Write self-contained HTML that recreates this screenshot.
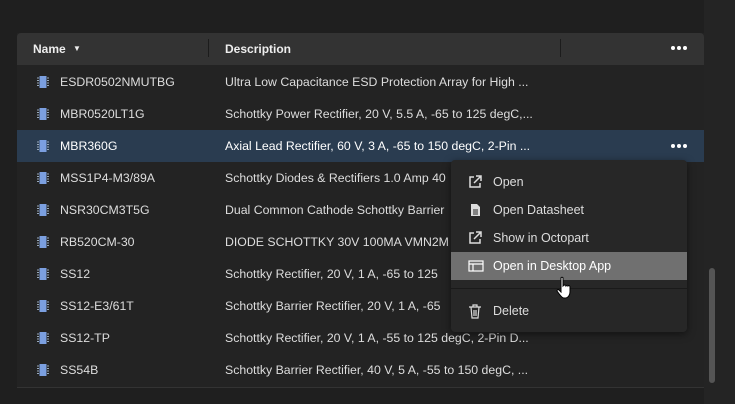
<!DOCTYPE html>
<html><head><style>
*{margin:0;padding:0;box-sizing:border-box}
body{width:735px;height:404px;background:#1f1f1f;font-family:"Liberation Sans",sans-serif;position:relative;overflow:hidden;color:#e6e6e6}
.strip{position:absolute;left:704px;top:0;width:31px;height:404px;background:#242424}
.tbl{position:absolute;left:17px;top:33px;width:687px;height:355px;background:#232323;border-bottom:1px solid #333}
.hdr{position:absolute;left:0;top:0;width:687px;height:32px;background:#333;border-radius:4px 4px 0 0;font-size:12px;font-weight:bold;color:#eee}
.hdr span{position:absolute;top:9px}
.sep{position:absolute;top:6px;width:1px;height:18px;background:#1c1c1c}
.row{position:absolute;left:0;width:687px;height:32px;font-size:12.3px;color:#ddd}
.row.sel{background:#2a3c50;color:#fff}
.row .n{position:absolute;left:43px;top:9px}
.row .d{position:absolute;left:208px;top:9px}
.chip{position:absolute;left:19px;top:9px;width:14px;height:14px}
.dots{position:absolute;display:flex;gap:2px}
.dots i{width:4px;height:4px;border-radius:50%;background:#fff;display:block}
.menu{position:absolute;left:451px;top:160px;width:236px;height:172px;background:#272727;border-radius:4px;box-shadow:0 2px 8px rgba(0,0,0,.5);font-size:12.5px;color:#ddd}
.mi{position:absolute;left:0;width:236px;height:28px}
.mi span{position:absolute;left:42px;top:7px}
.mi svg{position:absolute;left:17px;top:7px}
.mi.hl{background:#707070;color:#fff}
.scroll{position:absolute;left:709px;top:268px;width:6px;height:115px;border-radius:3px;background:#555}
</style></head><body>
<div class="strip"></div>
<div class="tbl">
<div class="hdr"><span style="left:16px">Name</span><span style="left:56px;top:11px;font-size:8px">&#9660;</span><div class="sep" style="left:191px"></div><span style="left:208px">Description</span><div class="sep" style="left:543px"></div>
<div class="dots" style="left:654px;top:13px"><i></i><i></i><i></i></div></div>
</div>
<div id="rows"></div>
<div class="menu">
<div class="mi" style="top:8px"><svg width="14" height="14" viewBox="0 0 14 14" fill="none" stroke="#ddd" stroke-width="1.5"><path d="M6 2H2v10h10V8M8 1h5v5M13 1L6 8"/></svg><span>Open</span></div>
<div class="mi" style="top:36px"><svg width="14" height="14" viewBox="0 0 14 14"><path d="M3 1h6l3 3v9H3z" fill="#ddd"/><path d="M5 7h5M5 9h5M5 11h5" stroke="#272727"/></svg><span>Open Datasheet</span></div>
<div class="mi" style="top:64px"><svg width="14" height="14" viewBox="0 0 14 14" fill="none" stroke="#ddd" stroke-width="1.5"><path d="M6 2H2v10h10V8M8 1h5v5M13 1L6 8"/></svg><span>Show in Octopart</span></div>
<div class="mi hl" style="top:92px"><svg width="16" height="14" viewBox="0 0 16 14" fill="none" stroke="#fff" stroke-width="1.2"><rect x="1" y="2" width="14" height="10"/><path d="M1 5h14M5 5v7"/></svg><span>Open in Desktop App</span></div>
<div style="position:absolute;left:0;top:128px;width:236px;height:1px;background:#1a1a1a"></div>
<div class="mi" style="top:137px"><svg width="14" height="15" viewBox="0 0 14 15" fill="none" stroke="#ddd" stroke-width="1.2"><path d="M1 3h12M5 3V1h4v2M3 3l1 11h6l1-11M6 6v6M8 6v6"/></svg><span>Delete</span></div>
</div>
<svg style="position:absolute;left:556px;top:276px" width="18" height="24" viewBox="0 0 18 24"><path d="M5 2c0-1 2-1 2 0v8l1-1c1 0 2 0 2 1 1-1 2-1 2 0 1-1 2 0 2 1v5c0 3-2 6-5 6H8c-2 0-3-2-4-3l-3-4c0-1 1-2 2-1l2 2z" fill="#fff" stroke="#000" stroke-width="1"/></svg>
<div class="scroll"></div>
<script>
var d=[["ESDR0502NMUTBG","Ultra Low Capacitance ESD Protection Array for High ..."],["MBR0520LT1G","Schottky Power Rectifier, 20 V, 5.5 A, -65 to 125 degC,..."],["MBR360G","Axial Lead Rectifier, 60 V, 3 A, -65 to 150 degC, 2-Pin ..."],["MSS1P4-M3/89A","Schottky Diodes &amp; Rectifiers 1.0 Amp 40"],["NSR30CM3T5G","Dual Common Cathode Schottky Barrier"],["RB520CM-30","DIODE SCHOTTKY 30V 100MA VMN2M"],["SS12","Schottky Rectifier, 20 V, 1 A, -65 to 125"],["SS12-E3/61T","Schottky Barrier Rectifier, 20 V, 1 A, -65"],["SS12-TP","Schottky Rectifier, 20 V, 1 A, -55 to 125 degC, 2-Pin D..."],["SS54B","Schottky Barrier Rectifier, 40 V, 5 A, -55 to 150 degC, ..."]];
var h="";d.forEach(function(r,i){var y=66+i*32;h+='<div class="row'+(i==2?' sel':'')+'" style="left:17px;top:'+y+'px"><svg class="chip" viewBox="0 0 14 14"><rect x="3.5" y="1" width="7" height="12" fill="#7b9fe0"/><path d="M1 3h2M1 5.5h2M1 8h2M1 10.5h2M11 3h2M11 5.5h2M11 8h2M11 10.5h2" stroke="#9ab" stroke-width="1"/></svg><span class="n">'+r[0]+'</span><span class="d">'+r[1]+'</span>'+(i==2?'<div class="dots" style="left:654px;top:14px"><i></i><i></i><i></i></div>':'')+'</div>';});
document.getElementById("rows").innerHTML=h;
</script>
</body></html>
